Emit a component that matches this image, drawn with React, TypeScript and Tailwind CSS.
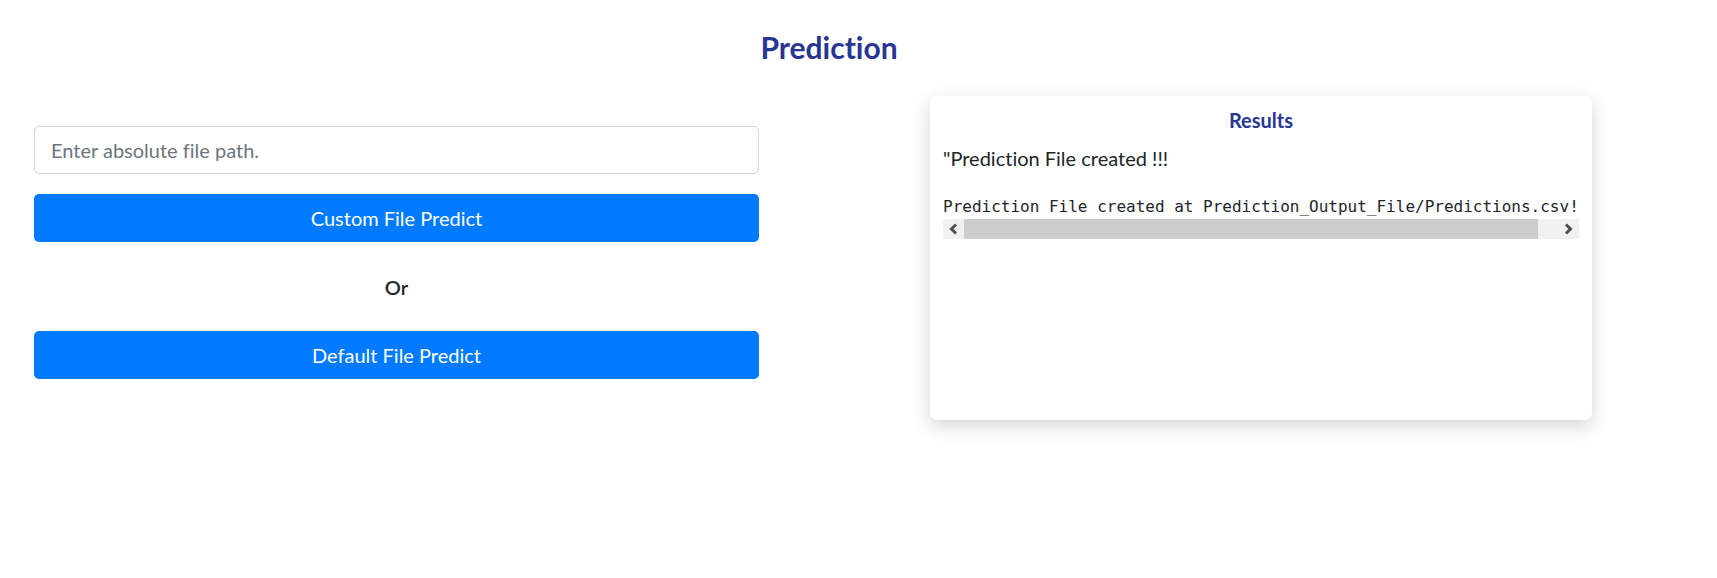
import React from "react";

const Chevron = ({ dir }: { dir: "left" | "right" }) => (
  <svg width="9" height="12" viewBox="0 0 9 12" className="block">
    <polyline
      points={dir === "left" ? "7,1.5 2.5,6 7,10.5" : "2,1.5 6.5,6 2,10.5"}
      fill="none"
      stroke="#505050"
      strokeWidth="3"
    />
  </svg>
);

const App = () => {
  return (
    <div className="w-full h-[578px] bg-white font-['Lato',sans-serif] [font-variant-ligatures:none] text-[#212529]">
      <div className="flex justify-center pt-[29px] pr-[59px]">
        <h1 className="text-[30px] leading-[36px] font-bold text-[#283593]">Prediction</h1>
      </div>

      <div className="flex items-start mt-[31px]">
        {/* left column */}
        <div className="ml-[34px] w-[725px] mt-[30px] flex flex-col">
          <input
            type="text"
            placeholder="Enter absolute file path."
            className="h-[48px] w-full border border-[#ced4da] rounded-[5px] px-[16px] text-[20px] text-[#495057] placeholder:text-[#6c757d] outline-none"
          />
          <button
            type="button"
            className="mt-[20px] h-[48px] w-full rounded-[5px] bg-[#007bff] text-white text-[20px]"
          >
            Custom File Predict
          </button>
          <div className="mt-[33px] mb-[32px] text-center text-[20px] leading-[24px] font-semibold">Or</div>
          <button
            type="button"
            className="h-[48px] w-full rounded-[5px] bg-[#007bff] text-white text-[20px]"
          >
            Default File Predict
          </button>
        </div>

        {/* results card */}
        <div className="ml-[171px] w-[662px] h-[324px] rounded-[7px] bg-white shadow-[0_6px_18px_rgba(0,0,0,0.17)] px-[13px] pt-[12px]">
          <h2 className="text-center text-[20px] leading-[24px] font-bold text-[#283593]">Results</h2>
          <p className="mt-[11px] text-[20px] leading-[30px]">"Prediction File created !!!</p>
          <div className="mt-[22px]">
            <pre className="overflow-hidden whitespace-pre font-['DejaVu_Sans_Mono',monospace] text-[16px] leading-[24px] text-[#212529]">
              Prediction File created at Prediction_Output_File/Predictions.csv!
            </pre>
            <div className="flex h-[20px] bg-[#f1f1f1]">
              <div className="w-[21px] flex items-center justify-center">
                <Chevron dir="left" />
              </div>
              <div className="flex-1 bg-[#cdcdcd]" />
              <div className="w-[20px]" />
              <div className="w-[21px] flex items-center justify-center">
                <Chevron dir="right" />
              </div>
            </div>
          </div>
        </div>
      </div>
    </div>
  );
};

export default App;
